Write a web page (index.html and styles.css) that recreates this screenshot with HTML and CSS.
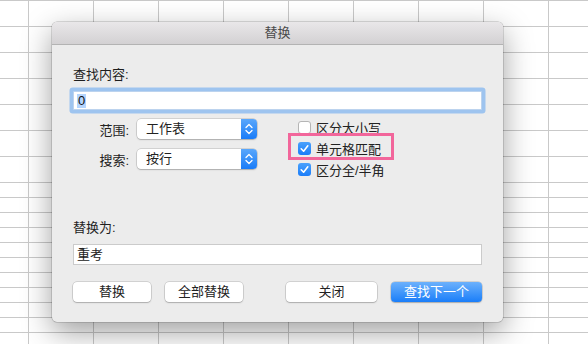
FILE: index.html
```html
<!DOCTYPE html>
<html lang="zh-CN">
<head>
    <meta charset="UTF-8">
    <title>替换</title>
    <link rel="stylesheet" href="styles.css">
</head>
<body>
    <div class="sheet">
        <div class="band tall"></div>
        <div class="band short"></div>
    </div>

    <div class="dialog">
        <div class="titlebar">替换</div>
        <div class="content">
            <div class="label">查找内容:</div>
            <div class="field focus"><span class="sel">0</span></div>

            <div class="options">
                <div class="selects">
                    <div class="select-row">
                        <span class="select-label">范围:</span>
                        <div class="popup">
                            <span class="popup-text">工作表</span>
                            <span class="stepper">
                                <svg width="16" height="20" viewBox="0 0 16 20"><path d="M5 8.5 L8 5.5 L11 8.5 M5 11.5 L8 14.5 L11 11.5" fill="none" stroke="#fff" stroke-width="1.3" stroke-linecap="round" stroke-linejoin="round"/></svg>
                            </span>
                        </div>
                    </div>
                    <div class="select-row">
                        <span class="select-label">搜索:</span>
                        <div class="popup">
                            <span class="popup-text">按行</span>
                            <span class="stepper">
                                <svg width="16" height="20" viewBox="0 0 16 20"><path d="M5 8.5 L8 5.5 L11 8.5 M5 11.5 L8 14.5 L11 11.5" fill="none" stroke="#fff" stroke-width="1.3" stroke-linecap="round" stroke-linejoin="round"/></svg>
                            </span>
                        </div>
                    </div>
                </div>

                <div class="checks">
                    <div class="check"><span class="box"></span>区分大小写</div>
                    <div class="check marked">
                        <span class="box on"><svg width="13" height="13" viewBox="0 0 13 13"><path d="M3.2 6.8 L5.6 9.2 L9.8 3.8" fill="none" stroke="#fff" stroke-width="1.6" stroke-linecap="round" stroke-linejoin="round"/></svg></span>单元格匹配
                    </div>
                    <div class="check">
                        <span class="box on"><svg width="13" height="13" viewBox="0 0 13 13"><path d="M3.2 6.8 L5.6 9.2 L9.8 3.8" fill="none" stroke="#fff" stroke-width="1.6" stroke-linecap="round" stroke-linejoin="round"/></svg></span>区分全/半角
                    </div>
                </div>
            </div>

            <div class="label replace-label">替换为:</div>
            <div class="field plain">重考</div>

            <div class="buttons">
                <button class="btn small">替换</button>
                <button class="btn small">全部替换</button>
                <span class="spacer"></span>
                <button class="btn wide">关闭</button>
                <button class="btn wide primary">查找下一个</button>
            </div>
        </div>
    </div>
</body>
</html>
```

FILE: styles.css
```css
body {
    margin: 0;
    width: 588px;
    height: 344px;
    overflow: hidden;
    background: #fff;
    font-family: "Liberation Sans", "Noto Sans CJK SC", sans-serif;
    font-size: 13px;
    color: #222;
}

/* spreadsheet behind the dialog */
.sheet {
    width: 588px;
}
.band {
    background-image:
        linear-gradient(to right, #c9c9c9 1px, transparent 1px),
        linear-gradient(#c9c9c9 1px, transparent 1px);
    background-position: 28px 0, 0 0;
}
.tall {
    height: 182px;
    background-size: 65px 100%, 100% 26px;
}
.short {
    height: 162px;
    background-size: 65px 100%, 100% 15px;
}

/* dialog */
.dialog {
    position: absolute;
    left: 52px;
    top: 22px;
    width: 451px;
    height: 300px;
    background: #ececec;
    border-radius: 5px;
    overflow: hidden;
    box-shadow: 0 10px 30px rgba(0,0,0,0.38), 0 0 0 0.5px rgba(0,0,0,0.25);
}
.titlebar {
    height: 22px;
    line-height: 22px;
    text-align: center;
    color: #4a4a4a;
    background: linear-gradient(#e9e7e9, #d3d1d3);
    border-bottom: 1px solid #b3b3b3;
}
.content {
    padding: 22px 21px 0 21px;
}
.label {
    line-height: 16px;
    color: #1e1e1e;
}
.field {
    box-sizing: border-box;
    margin-top: 8px;
    background: #fff;
    padding-left: 3px;
}
.focus {
    height: 19px;
    line-height: 18px;
    border: 1px solid #bcd3ee;
    box-shadow: 0 0 0 3.5px #9ec4ef;
    border-radius: 1px;
}
.sel {
    display: inline-block;
    background: #b4d5fe;
    line-height: 14px;
    padding: 0 1px;
    color: #111;
}
.plain {
    height: 21px;
    line-height: 19px;
    border: 1px solid #cbcbcb;
}

/* options block */
.options {
    display: flex;
    margin-top: 7px;
    height: 63px;
}
.selects {
    padding-top: 2px;
    display: flex;
    flex-direction: column;
    gap: 10px;
}
.select-row {
    display: flex;
    align-items: center;
    gap: 8px;
}
.select-label {
    width: 56px;
    text-align: right;
}
.popup {
    width: 120px;
    height: 20px;
    display: flex;
    background: #fff;
    border-radius: 4px;
    box-shadow: 0 0 0 0.5px rgba(0,0,0,0.22), 0 1px 1.5px rgba(0,0,0,0.18);
    overflow: hidden;
}
.popup-text {
    flex: 1;
    line-height: 20px;
    padding-left: 9px;
}
.stepper {
    width: 16px;
    height: 20px;
    background: linear-gradient(#5aa7fb, #1a7cf8);
}
.stepper svg {
    display: block;
}

.checks {
    margin-left: 41px;
    display: flex;
    flex-direction: column;
}
.check {
    position: relative;
    height: 21px;
    display: flex;
    align-items: center;
    gap: 5px;
}
.box {
    box-sizing: border-box;
    width: 13px;
    height: 13px;
    border-radius: 3px;
    background: #fff;
    border: 1px solid #b5b5b5;
}
.box.on {
    border: none;
    background: linear-gradient(#4aa1fc, #1b7df9);
}
.box svg {
    display: block;
}
/* pink highlight frame */
.marked::after {
    content: "";
    position: absolute;
    left: -10px;
    top: -5px;
    width: 100px;
    height: 21px;
    border: 3px solid #f2669b;
}

.replace-label {
    margin-top: 40px;
}

/* buttons */
.buttons {
    display: flex;
    gap: 14px;
    margin-top: 17px;
}
.spacer {
    flex: 1;
}
.btn {
    height: 20px;
    padding: 0;
    font: inherit;
    line-height: 18px;
    color: #222;
    background: #fff;
    border: none;
    border-radius: 4px;
    box-shadow: 0 0 0 0.5px rgba(0,0,0,0.22), 0 1px 1.5px rgba(0,0,0,0.18);
}
.small {
    width: 78px;
}
.wide {
    width: 91px;
}
.primary {
    color: #fff;
    background: linear-gradient(#6cb1fc, #1a7ef9);
}
```
